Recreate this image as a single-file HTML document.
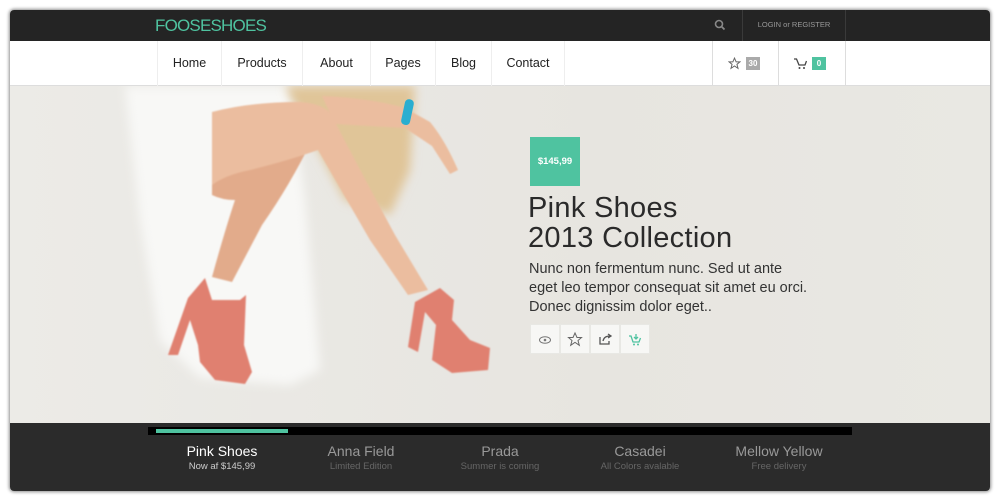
<!DOCTYPE html>
<html><head><meta charset="utf-8"><style>
*{margin:0;padding:0;box-sizing:border-box}
body{width:1000px;height:500px;background:#fff;font-family:"Liberation Sans",sans-serif;position:relative;overflow:hidden}
.frame{position:absolute;left:10px;top:10px;width:980px;height:481px;border-radius:4px;overflow:hidden;box-shadow:0 0 3px 1px rgba(0,0,0,.45)}
.top{position:absolute;left:0;top:0;width:980px;height:31px;background:#242424}
.logo{position:absolute;left:145px;top:6px;color:#4fc3a0;font-size:17px;letter-spacing:-0.8px}
.nav{position:absolute;left:0;top:31px;width:980px;height:45px;background:#fff;border-bottom:1px solid #ddd}
.nav a{position:absolute;top:0;height:45px;line-height:45px;font-size:12.5px;color:#222;text-align:center;border-left:1px solid #eee}
.hero{position:absolute;left:0;top:76px;width:980px;height:337px;background:linear-gradient(90deg,#ecebe7,#e7e5e0 60%,#e9e8e3)}
.bot{position:absolute;left:0;top:413px;width:980px;height:68px;background:#2b2b2b}
.it{position:absolute;top:20px;width:140px;text-align:center}
.it b{display:block;font-weight:normal;font-size:14px;color:#999}
.it span{display:block;font-size:9.5px;color:#666;margin-top:2px}
.ib{position:absolute;top:238px;width:30px;height:30px;background:#f7f7f5;border:1px solid #e8e8e4}
</style></head><body>
<div class="frame">
<div class="top">
<div class="logo">FOOSESHOES</div>
<svg style="position:absolute;left:704px;top:9px" width="12" height="12" viewBox="0 0 12 12"><circle cx="5" cy="5" r="3.5" fill="none" stroke="#888" stroke-width="1.6"/><path d="M7.5 7.5L10.5 10.5" stroke="#888" stroke-width="1.8"/></svg>
<div style="position:absolute;left:732px;top:0;width:104px;height:31px;border-left:1px solid #3a3a3a;border-right:1px solid #3a3a3a;color:#999;font-size:7.5px;text-align:center;line-height:30px">LOGIN or REGISTER</div>
</div>
<div class="nav">
<a style="left:147px;width:64px">Home</a>
<a style="left:211px;width:81px">Products</a>
<a style="left:292px;width:68px">About</a>
<a style="left:360px;width:65px">Pages</a>
<a style="left:425px;width:56px">Blog</a>
<a style="left:481px;width:74px;border-right:1px solid #eee">Contact</a>
<div style="position:absolute;left:702px;top:0;width:134px;height:45px;border-left:1px solid #ddd;border-right:1px solid #ddd"></div>
<div style="position:absolute;left:768px;top:0;height:45px;border-left:1px solid #ddd"></div>
<svg style="position:absolute;left:718px;top:16px" width="13" height="13" viewBox="0 0 24 24"><path d="M12 2l3 7h7l-5.5 4.5 2 7.5-6.5-4.5-6.5 4.5 2-7.5L2 9h7z" fill="none" stroke="#666" stroke-width="1.8"/></svg>
<div style="position:absolute;left:736px;top:16px;width:14px;height:13px;background:#aaa;color:#fff;font-size:8px;font-weight:bold;text-align:center;line-height:13px">30</div>
<svg style="position:absolute;left:784px;top:17px" width="13" height="12" viewBox="0 0 13 12"><path d="M0 1h2.5l2.5 6h6l1.5-4" fill="none" stroke="#444" stroke-width="1.3"/><circle cx="5.5" cy="10" r="1" fill="#444"/><circle cx="10" cy="10" r="1" fill="#444"/></svg>
<div style="position:absolute;left:802px;top:16px;width:14px;height:13px;background:#4fc3a0;color:#fff;font-size:8px;font-weight:bold;text-align:center;line-height:13px">0</div>
</div>
<div class="hero">
<svg width="980" height="337" style="position:absolute;left:0;top:0" viewBox="10 86 980 337">
<defs><filter id="bl"><feGaussianBlur stdDeviation="5"/></filter><filter id="b2"><feGaussianBlur stdDeviation="0.8"/></filter></defs>
<path d="M125 86 L290 86 L305 200 L320 370 L290 385 L200 378 L160 340 L140 220Z" fill="#f8f8f6" filter="url(#bl)"/>
<path d="M285 86 L415 86 L410 170 L390 215 L345 200 Z" fill="#e0c598" filter="url(#bl)"/>
<g filter="url(#b2)">
<path d="M212 175 Q250 140 290 128 L312 140 Q290 185 262 225 L232 282 L212 277 Q225 230 235 200 Q222 200 212 195 Z" fill="#e2ab8b"/>
<path d="M212 112 Q250 102 300 102 Q330 104 335 122 Q360 170 395 235 L428 290 L408 295 L370 240 L318 150 Q290 160 250 170 Q225 175 212 185 Z" fill="#ebbd9f"/>
<path d="M322 96 Q370 98 405 108 L430 122 Q445 140 458 170 L450 174 L432 146 L405 128 L335 124 Z" fill="#ebbd9f"/>
</g>
<rect x="403" y="99" width="9" height="26" rx="4" fill="#2aaed0" transform="rotate(12 407 112)"/>
<g fill="#e08070" filter="url(#b2)">
<path d="M205 278 L212 300 L240 300 L246 295 L244 345 L252 372 L245 384 L215 380 L200 362 L198 345 L190 320 L178 355 L168 355 L188 298 Z"/>
<path d="M415 302 L440 288 L454 300 L452 320 L470 340 L490 348 L488 370 L452 373 L432 360 L436 325 L425 312 L418 352 L408 347 Z"/>
</g>
</svg>
<div style="position:absolute;left:520px;top:51px;width:50px;height:49px;background:#4fc3a0;color:#fff;font-size:9.5px;font-weight:bold;text-align:center;line-height:49px">$145,99</div>
<div style="position:absolute;left:518px;top:107px;font-size:29px;line-height:30px;color:#2a2a2a;letter-spacing:0.3px">Pink Shoes<br>2013 Collection</div>
<div style="position:absolute;left:519px;top:174px;font-size:14.5px;line-height:19px;color:#333">Nunc non fermentum nunc. Sed ut ante<br>eget leo tempor consequat sit amet eu orci.<br>Donec dignissim dolor eget..</div>
<div class="ib" style="left:520px"><svg width="28" height="28" viewBox="0 0 28 28"><ellipse cx="14" cy="15" rx="5.5" ry="3.2" fill="none" stroke="#777" stroke-width="1"/><circle cx="14" cy="15" r="1.3" fill="#777"/></svg></div>
<div class="ib" style="left:550px"><svg width="28" height="28" viewBox="0 0 28 28"><path d="M14 8l2 4.5h4.5l-3.5 3 1.3 4.8-4.3-3-4.3 3 1.3-4.8-3.5-3H12z" fill="none" stroke="#666" stroke-width="1"/></svg></div>
<div class="ib" style="left:580px"><svg width="28" height="28" viewBox="0 0 28 28"><path d="M9 12v7h9v-3M12 16q1-5 7-5M17 9l3 2-3 2" fill="none" stroke="#555" stroke-width="1.3"/></svg></div>
<div class="ib" style="left:610px"><svg width="28" height="28" viewBox="0 0 28 28"><path d="M8 11h2l2 6h6l1.5-4M15 9v5M13 12l2 2 2-2" fill="none" stroke="#4fc3a0" stroke-width="1.3"/><circle cx="13" cy="19.5" r="1" fill="#4fc3a0"/><circle cx="17" cy="19.5" r="1" fill="#4fc3a0"/></svg></div>
</div>
<div class="bot">
<div style="position:absolute;left:138px;top:4px;width:704px;height:8px;background:#000"></div>
<div style="position:absolute;left:146px;top:6px;width:132px;height:4px;background:#4fc3a0"></div>
<div class="it" style="left:142px"><b style="color:#fff">Pink Shoes</b><span style="color:#ccc">Now af $145,99</span></div>
<div class="it" style="left:281px"><b>Anna Field</b><span>Limited Edition</span></div>
<div class="it" style="left:420px"><b>Prada</b><span>Summer is coming</span></div>
<div class="it" style="left:560px"><b>Casadei</b><span>All Colors avalable</span></div>
<div class="it" style="left:699px"><b>Mellow Yellow</b><span>Free delivery</span></div>
</div>
</div>
</body></html>
